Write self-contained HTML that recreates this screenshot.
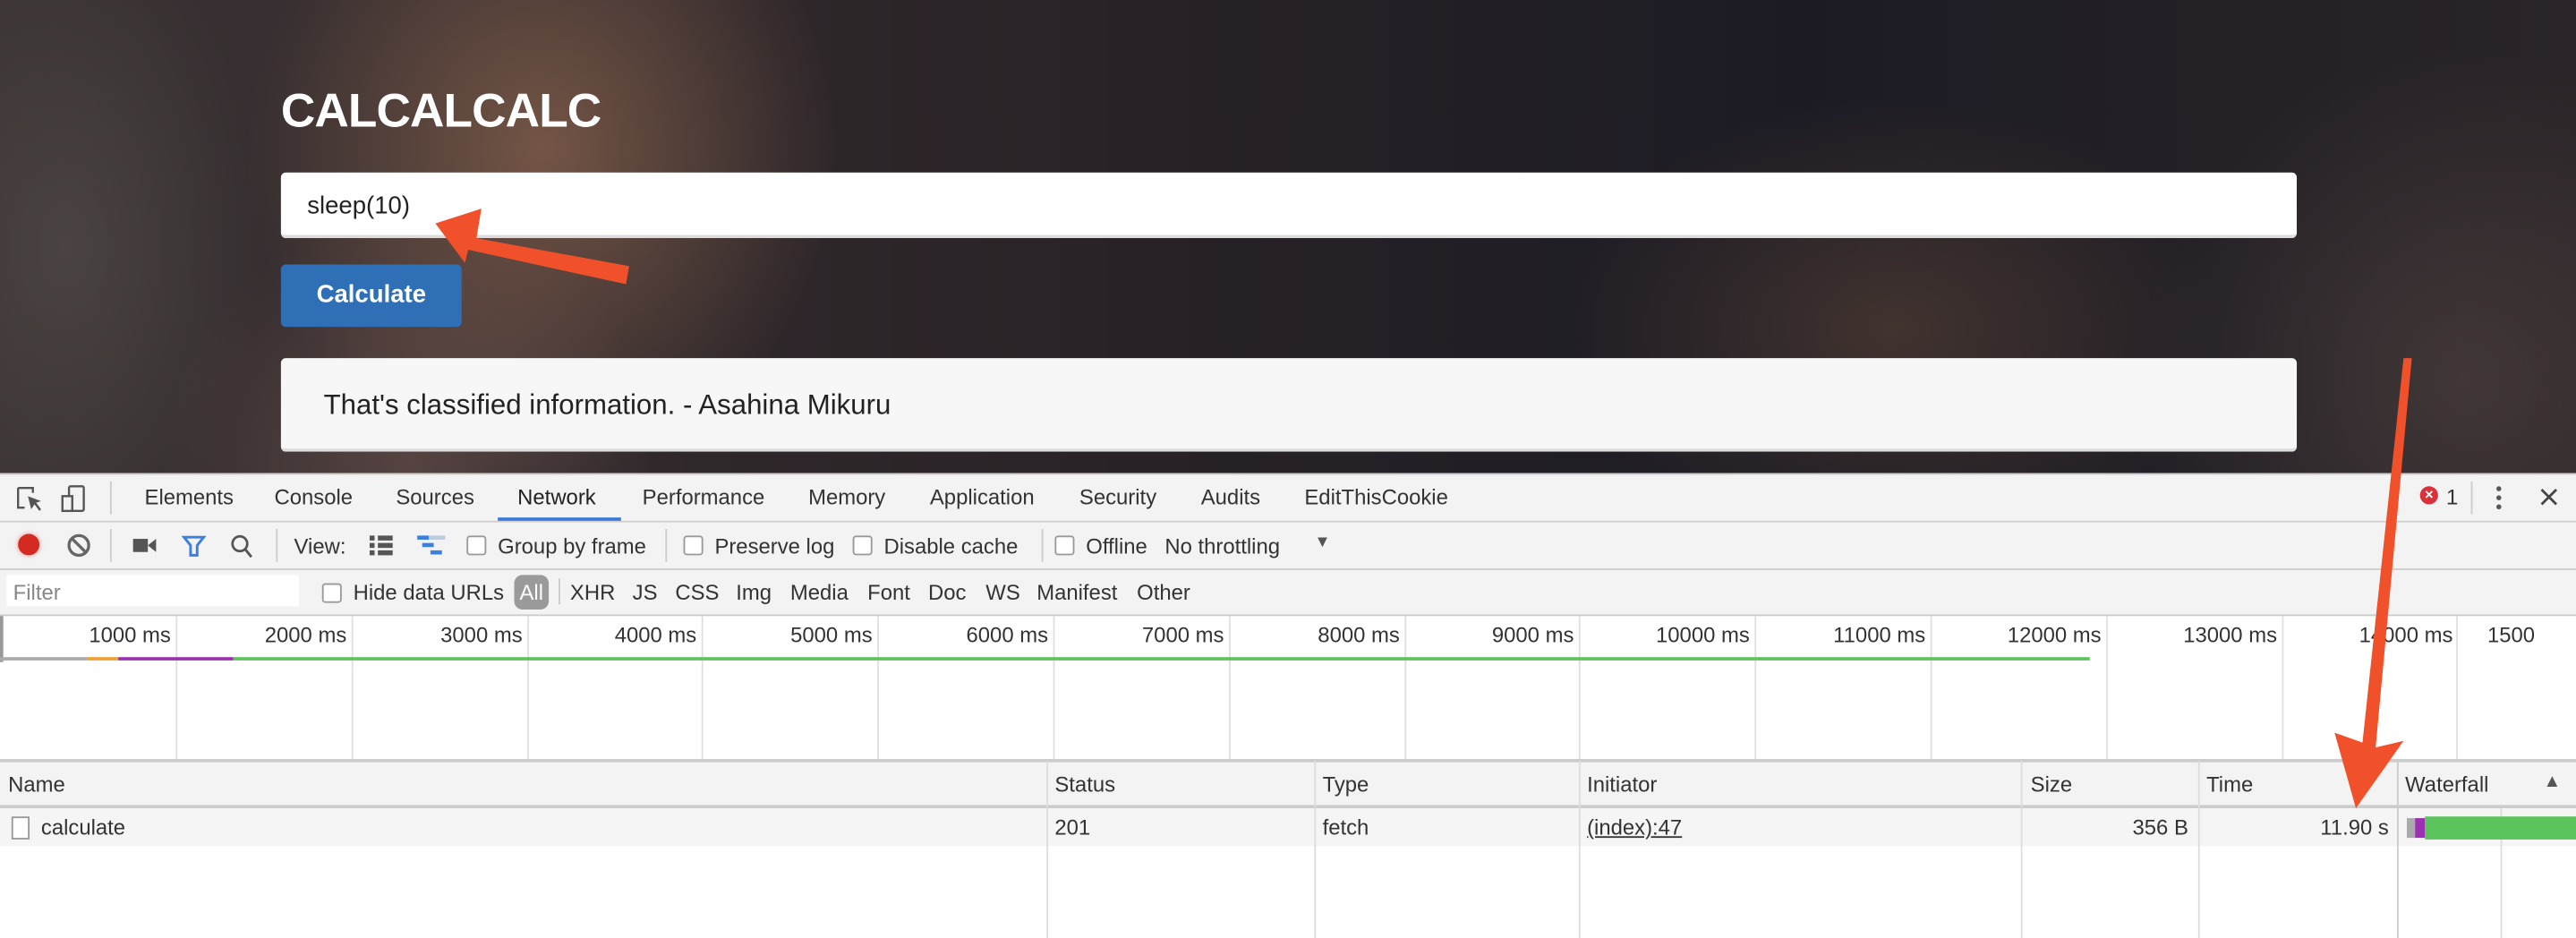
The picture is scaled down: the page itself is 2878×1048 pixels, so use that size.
<!DOCTYPE html>
<html><head><meta charset="utf-8"><style>
*{margin:0;padding:0;box-sizing:border-box}
html,body{width:2878px;height:1048px;overflow:hidden;background:#fff}
#s{position:absolute;left:0;top:0;width:1568px;height:571px;transform:scale(1.8355);transform-origin:0 0;font-family:"Liberation Sans",Arial,sans-serif;font-size:13px;color:#333}
.a{position:absolute;white-space:nowrap}
#bg{position:absolute;left:0;top:0;width:1568px;height:288px;background:
radial-gradient(ellipse 180px 200px at 330px 90px,rgba(170,120,90,.55),transparent),
radial-gradient(ellipse 150px 150px at 250px 280px,rgba(120,90,85,.5),transparent),
radial-gradient(ellipse 200px 140px at 1150px 200px,rgba(110,80,60,.45),transparent),
radial-gradient(ellipse 120px 200px at 40px 150px,rgba(90,85,80,.5),transparent),
radial-gradient(ellipse 200px 200px at 1500px 230px,rgba(90,75,70,.5),transparent),
linear-gradient(90deg,#3a3233,#2a2327 40%,#1c1b24 70%,#2a2428)}
.tb{position:absolute;left:0;width:1568px;background:#f3f3f3;border-bottom:1px solid #ccc}
.cb{position:absolute;width:12px;height:12px;border:1px solid #999;border-radius:2px;background:#fff}
.sep{position:absolute;width:1px;background:#ccc}
.gl{position:absolute;top:375px;height:87px;width:1px;background:#e0e0e0}
.tl{position:absolute;top:379px;text-align:right;width:100px}
.cl{position:absolute;top:463px;height:108px;width:1px;background:#ddd}
</style></head><body><div id="s">
<div id="bg"></div>
<div class="a" style="left:171px;top:52px;font-size:29px;font-weight:bold;color:#fff;letter-spacing:-0.5px">CALCALCALC</div>
<div class="a" style="left:171px;top:105px;width:1227px;height:40px;background:#fff;border-radius:3px;border-bottom:2px solid #ddd"></div>
<div class="a" style="left:187px;top:117px;font-size:15px;color:#222">sleep(10)</div>
<div class="a" style="left:171px;top:161px;width:110px;height:38px;background:#2e6fb5;border-radius:3px;color:#fff;font-weight:bold;font-size:15px;line-height:38px;text-align:center">Calculate</div>
<div class="a" style="left:171px;top:218px;width:1227px;height:57px;background:#f7f7f7;border-radius:3px;border-bottom:2px solid #ddd"></div>
<div class="a" style="left:197px;top:237px;font-size:17px;color:#222">That's classified information. - Asahina Mikuru</div>

<div class="tb" style="top:288px;height:30px;border-top:1px solid #ccc"></div>
<svg class="a" style="left:9px;top:295px" width="50" height="18"><path d="M2 2h9v3M2 2v12h4" fill="none" stroke="#555" stroke-width="1.3"/><path d="M8 7l8 3-3 1 3 4-1 1-3-4-2 3z" fill="#555"/><rect x="33" y="1" width="9" height="15" rx="1" fill="none" stroke="#555" stroke-width="1.3"/><rect x="29" y="7" width="6" height="9" fill="#f3f3f3" stroke="#555" stroke-width="1.3"/></svg>
<div class="sep" style="left:67px;top:293px;height:20px"></div>
<div class="a" style="left:88px;top:295px">Elements</div>
<div class="a" style="left:167px;top:295px">Console</div>
<div class="a" style="left:241px;top:295px">Sources</div>
<div class="a" style="left:315px;top:295px;color:#222">Network</div>
<div class="a" style="left:303px;top:315px;width:75px;height:2px;background:#3879d9"></div>
<div class="a" style="left:391px;top:295px">Performance</div>
<div class="a" style="left:492px;top:295px">Memory</div>
<div class="a" style="left:566px;top:295px">Application</div>
<div class="a" style="left:657px;top:295px">Security</div>
<div class="a" style="left:731px;top:295px">Audits</div>
<div class="a" style="left:794px;top:295px">EditThisCookie</div>
<div class="a" style="left:1473px;top:296px;width:11px;height:11px;border-radius:50%;background:#d9303a;color:#fff;font-size:9px;line-height:11px;text-align:center;font-weight:bold">×</div>
<div class="a" style="left:1489px;top:295px">1</div>
<div class="sep" style="left:1504px;top:293px;height:20px"></div>
<svg class="a" style="left:1517px;top:295px" width="44" height="16"><circle cx="4" cy="2.5" r="1.5" fill="#555"/><circle cx="4" cy="8" r="1.5" fill="#555"/><circle cx="4" cy="13.5" r="1.5" fill="#555"/><path d="M30 3l9 9M39 3l-9 9" stroke="#444" stroke-width="1.5"/></svg>

<div class="tb" style="top:318px;height:29px"></div>
<div class="a" style="left:11px;top:325px;width:13px;height:13px;border-radius:50%;background:#d32a22;box-shadow:0 0 3px #e88"></div>
<svg class="a" style="left:40px;top:324px" width="130" height="16"><circle cx="8" cy="8" r="6" fill="none" stroke="#666" stroke-width="1.8"/><path d="M4 4l8 8" stroke="#666" stroke-width="1.8"/><rect x="41" y="4" width="9" height="8" fill="#555"/><path d="M50 8l5-4v8z" fill="#555"/><path d="M72 3h12l-4 5v6h-4v-6z" fill="none" stroke="#3b7fe0" stroke-width="1.6"/><circle cx="106" cy="7" r="4.5" fill="none" stroke="#555" stroke-width="1.5"/><path d="M109 10l4 5" stroke="#555" stroke-width="1.6"/></svg>
<div class="sep" style="left:67px;top:322px;height:20px"></div>
<div class="sep" style="left:168px;top:322px;height:20px"></div>
<div class="a" style="left:179px;top:325px">View:</div>
<svg class="a" style="left:224px;top:325px" width="50" height="14"><rect x="1" y="1" width="3" height="3" fill="#555"/><rect x="6" y="1" width="9" height="3" fill="#555"/><rect x="1" y="5.5" width="3" height="3" fill="#555"/><rect x="6" y="5.5" width="9" height="3" fill="#555"/><rect x="1" y="10" width="3" height="3" fill="#555"/><rect x="6" y="10" width="9" height="3" fill="#555"/><rect x="30" y="1" width="7" height="2.5" fill="#3b7fe0"/><rect x="37" y="1" width="10" height="2.5" fill="#bcd"/><rect x="33" y="5.5" width="7" height="2.5" fill="#3b7fe0"/><rect x="38" y="10" width="7" height="2.5" fill="#3b7fe0"/></svg>
<div class="cb" style="left:284px;top:326px"></div><div class="a" style="left:303px;top:325px">Group by frame</div>
<div class="sep" style="left:405px;top:322px;height:20px"></div>
<div class="cb" style="left:416px;top:326px"></div><div class="a" style="left:435px;top:325px">Preserve log</div>
<div class="cb" style="left:519px;top:326px"></div><div class="a" style="left:538px;top:325px">Disable cache</div>
<div class="sep" style="left:634px;top:322px;height:20px"></div>
<div class="cb" style="left:642px;top:326px"></div><div class="a" style="left:661px;top:325px">Offline</div>
<div class="a" style="left:709px;top:325px">No throttling</div>
<div class="a" style="left:800px;top:325px;font-size:10px;color:#555">▼</div>

<div class="tb" style="top:347px;height:28px"></div>
<div class="a" style="left:4px;top:350px;width:178px;height:19px;background:#fff"></div>
<div class="a" style="left:8px;top:353px;color:#888">Filter</div>
<div class="cb" style="left:196px;top:355px"></div><div class="a" style="left:215px;top:353px">Hide data URLs</div>
<div class="a" style="left:313px;top:350px;width:21px;height:21px;background:#9a9a9a;border-radius:5px;color:#fff;text-align:center;line-height:21px">All</div>
<div class="sep" style="left:340px;top:352px;height:16px"></div>
<div class="a" style="left:347px;top:353px">XHR</div><div class="a" style="left:385px;top:353px">JS</div><div class="a" style="left:411px;top:353px">CSS</div><div class="a" style="left:448px;top:353px">Img</div><div class="a" style="left:481px;top:353px">Media</div><div class="a" style="left:528px;top:353px">Font</div><div class="a" style="left:565px;top:353px">Doc</div><div class="a" style="left:600px;top:353px">WS</div><div class="a" style="left:631px;top:353px">Manifest</div><div class="a" style="left:692px;top:353px">Other</div>

<div class="a" style="left:0;top:375px;width:2px;height:28px;background:#999"></div>
<div class="gl" style="left:107px"></div><div class="gl" style="left:214px"></div><div class="gl" style="left:321px"></div><div class="gl" style="left:427px"></div><div class="gl" style="left:534px"></div><div class="gl" style="left:641px"></div><div class="gl" style="left:748px"></div><div class="gl" style="left:855px"></div><div class="gl" style="left:961px"></div><div class="gl" style="left:1068px"></div><div class="gl" style="left:1175px"></div><div class="gl" style="left:1282px"></div><div class="gl" style="left:1389px"></div><div class="gl" style="left:1495px"></div>
<div class="tl" style="left:4px">1000 ms</div><div class="tl" style="left:111px">2000 ms</div><div class="tl" style="left:218px">3000 ms</div><div class="tl" style="left:324px">4000 ms</div><div class="tl" style="left:431px">5000 ms</div><div class="tl" style="left:538px">6000 ms</div><div class="tl" style="left:645px">7000 ms</div><div class="tl" style="left:752px">8000 ms</div><div class="tl" style="left:858px">9000 ms</div><div class="tl" style="left:965px">10000 ms</div><div class="tl" style="left:1072px">11000 ms</div><div class="tl" style="left:1179px">12000 ms</div><div class="tl" style="left:1286px">13000 ms</div><div class="tl" style="left:1393px">14000 ms</div><div class="a" style="left:1514px;top:379px">1500</div>
<div class="a" style="left:0;top:400px;width:53px;height:2px;background:#aaa"></div>
<div class="a" style="left:53px;top:400px;width:19px;height:2px;background:#f0a030"></div>
<div class="a" style="left:72px;top:400px;width:70px;height:2px;background:#9b30b0"></div>
<div class="a" style="left:142px;top:400px;width:1130px;height:2px;background:#5cc45c"></div>

<div class="tb" style="top:462px;height:30px;border-top:2px solid #ccc;border-bottom:2px solid #ccc"></div>
<div class="a" style="left:0;top:492px;width:1568px;height:23px;background:#f5f5f5"></div>
<div class="cl" style="left:637px"></div><div class="cl" style="left:800px"></div><div class="cl" style="left:961px"></div><div class="cl" style="left:1230px"></div><div class="cl" style="left:1338px"></div><div class="cl" style="left:1459px;background:#ccc"></div><div class="a" style="left:1522px;top:492px;width:1px;height:79px;background:#ddd"></div>
<div class="a" style="left:5px;top:470px">Name</div><div class="a" style="left:642px;top:470px">Status</div><div class="a" style="left:805px;top:470px">Type</div><div class="a" style="left:966px;top:470px">Initiator</div><div class="a" style="left:1236px;top:470px">Size</div><div class="a" style="left:1343px;top:470px">Time</div><div class="a" style="left:1464px;top:470px">Waterfall</div><div class="a" style="left:1548px;top:470px;font-size:11px;color:#555">▲</div>
<div class="a" style="left:7px;top:497px;width:11px;height:14px;border:1px solid #999;background:#fff"></div>
<div class="a" style="left:25px;top:496px">calculate</div><div class="a" style="left:642px;top:496px">201</div><div class="a" style="left:805px;top:496px">fetch</div><div class="a" style="left:966px;top:496px;text-decoration:underline">(index):47</div>
<div class="a" style="left:1232px;top:496px;width:100px;text-align:right">356 B</div><div class="a" style="left:1340px;top:496px;width:114px;text-align:right">11.90 s</div>
<div class="a" style="left:1465px;top:498px;width:5px;height:12px;background:#aaa"></div><div class="a" style="left:1470px;top:498px;width:6px;height:12px;background:#9b30b0"></div><div class="a" style="left:1476px;top:497px;width:92px;height:14px;background:#5cc45c"></div>

<svg class="a" style="left:0;top:0" width="1568" height="571"><polygon points="265,136 293,127 290,145 383,162 381,173 285,152 283,160" fill="#f0502a"/><polygon points="1463,218 1468,218 1446,455 1463,451 1434,492 1421,446 1438,452" fill="#f0502a"/></svg>
</div></body></html>
